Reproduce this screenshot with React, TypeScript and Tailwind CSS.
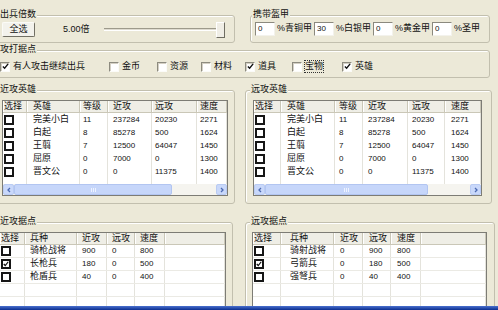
import type { ReactNode } from "react";

type Column = { label: string; width: string; pad: string };
type Row = { checked: boolean; cells: string[] };

const leftHeroColumns: Column[] = [
  { label: "选择", width: "w-[24px]", pad: "pl-[1px]" },
  { label: "英雄", width: "w-[53px]", pad: "pl-[6px]" },
  { label: "等级", width: "w-[28px]", pad: "pl-[3px]" },
  { label: "近攻", width: "w-[44px]", pad: "pl-[5px]" },
  { label: "远攻", width: "w-[45px]", pad: "pl-[3px]" },
  { label: "速度", width: "w-[30px]", pad: "pl-[3px]" },
];

const rightHeroColumns: Column[] = [
  { label: "选择", width: "w-[27px]", pad: "pl-[1px]" },
  { label: "英雄", width: "w-[54px]", pad: "pl-[6px]" },
  { label: "等级", width: "w-[28px]", pad: "pl-[4px]" },
  { label: "近攻", width: "w-[45px]", pad: "pl-[5px]" },
  { label: "远攻", width: "w-[37px]", pad: "pl-[4px]" },
  { label: "速度", width: "w-[36px]", pad: "pl-[6px]" },
];

const leftPointColumns: Column[] = [
  { label: "选择", width: "w-[25px]", pad: "pl-[1px]" },
  { label: "兵种", width: "w-[52px]", pad: "pl-[5px]" },
  { label: "近攻", width: "w-[30px]", pad: "pl-[5px]" },
  { label: "远攻", width: "w-[28px]", pad: "pl-[5px]" },
  { label: "速度", width: "w-[30px]", pad: "pl-[5px]" },
  { label: "", width: "w-[60px]", pad: "pl-[5px]" },
];

const rightPointColumns: Column[] = [
  { label: "选择", width: "w-[28px]", pad: "pl-[1px]" },
  { label: "兵种", width: "w-[53px]", pad: "pl-[9px]" },
  { label: "近攻", width: "w-[29px]", pad: "pl-[6px]" },
  { label: "远攻", width: "w-[28px]", pad: "pl-[6px]" },
  { label: "速度", width: "w-[30px]", pad: "pl-[6px]" },
  { label: "", width: "w-[65px]", pad: "pl-[5px]" },
];

const heroes: Row[] = [
  { checked: false, cells: ["完美小白", "11", "237284", "20230", "2271"] },
  { checked: false, cells: ["白起", "8", "85278", "500", "1624"] },
  { checked: false, cells: ["王翦", "7", "12500", "64047", "1450"] },
  { checked: false, cells: ["屈原", "0", "7000", "0", "1300"] },
  { checked: false, cells: ["晋文公", "0", "0", "11375", "1400"] },
];

const meleePoints: Row[] = [
  { checked: false, cells: ["骑枪战将", "900", "0", "800", ""] },
  { checked: true, cells: ["长枪兵", "180", "0", "500", ""] },
  { checked: false, cells: ["枪盾兵", "40", "0", "400", ""] },
  { checked: false, cells: ["", "", "", "", ""] },
  { checked: false, cells: ["", "", "", "", ""] },
];

const rangedPoints: Row[] = [
  { checked: false, cells: ["骑射战将", "0", "900", "800", ""] },
  { checked: true, cells: ["弓箭兵", "0", "180", "500", ""] },
  { checked: false, cells: ["强弩兵", "0", "40", "400", ""] },
  { checked: false, cells: ["", "", "", "", ""] },
  { checked: false, cells: ["", "", "", "", ""] },
];

const targets = [
  { label: "有人攻击继续出兵", checked: true, width: "w-[109px]", focus: false },
  { label: "金币", checked: false, width: "w-[48px]", focus: false },
  { label: "资源", checked: false, width: "w-[44px]", focus: false },
  { label: "材料", checked: false, width: "w-[44px]", focus: false },
  { label: "道具", checked: true, width: "w-[47px]", focus: false },
  { label: "宝物", checked: false, width: "w-[50px]", focus: true },
  { label: "英雄", checked: true, width: "w-[40px]", focus: false },
];

const armour = [
  { value: "0", label: "%青铜甲" },
  { value: "30", label: "%白银甲" },
  { value: "0", label: "%黄金甲" },
  { value: "0", label: "%圣甲" },
];

function Tick({ className }: { className: string }) {
  return (
    <svg viewBox="0 0 8 8" className={className} aria-hidden="true">
      <path d="M1 4l2 2 4-5" fill="none" stroke="#111" strokeWidth="1.6" />
    </svg>
  );
}

function GroupBox({
  title,
  titleLeft,
  className,
  children,
}: {
  title: string;
  titleLeft: string;
  className: string;
  children: ReactNode;
}) {
  return (
    <div
      className={`relative shrink-0 rounded-[3px] border border-[#c2bfae] shadow-[inset_1px_1px_0_#fff] ${className}`}
    >
      <span
        className={`absolute -top-[7px] bg-[#ece9d8] px-[1px] text-[9px] leading-[11px] text-[#111] ${titleLeft}`}
      >
        {title}
      </span>
      {children}
    </div>
  );
}

function CheckBox({ checked }: { checked: boolean }) {
  return (
    <span className="flex h-[10px] w-[10px] shrink-0 items-center justify-center border border-[#8d8b7f] border-b-[#fbfbf8] border-r-[#fbfbf8] bg-white shadow-[inset_1px_1px_0_#d4d0c4]">
      {checked && <Tick className="h-[7px] w-[7px]" />}
    </span>
  );
}

function TableCheck({ checked }: { checked: boolean }) {
  return (
    <span className="flex h-[10px] w-[10px] items-center justify-center border-2 border-[#161616] bg-white">
      {checked && <Tick className="h-[6px] w-[6px]" />}
    </span>
  );
}

function ArrowButton({ right }: { right?: boolean }) {
  return (
    <span className="flex h-[11px] w-[11px] shrink-0 items-center justify-center rounded-[2px] border border-[#b9cbf3] bg-[#c9d8fa]">
      <svg viewBox="0 0 6 6" className="h-[6px] w-[6px]" aria-hidden="true">
        <path
          d={right ? "M2 1l2 2-2 2" : "M4 1L2 3l2 2"}
          fill="none"
          stroke="#4d6bb3"
          strokeWidth="1.3"
        />
      </svg>
    </span>
  );
}

function HScroll({ thumb }: { thumb: string }) {
  return (
    <div className="flex h-[11px] shrink-0 bg-[#f5f4ef]">
      <ArrowButton />
      <span
        className={`flex h-[11px] shrink-0 items-center justify-center rounded-[2px] border border-[#b2c5f1] bg-[#c6d6fa] ${thumb}`}
      >
        <span className="flex gap-[1px]">
          <span className="h-[4px] w-[1px] bg-[#eef3ff]" />
          <span className="h-[4px] w-[1px] bg-[#eef3ff]" />
          <span className="h-[4px] w-[1px] bg-[#eef3ff]" />
        </span>
      </span>
      <span className="flex-1" />
      <ArrowButton right />
    </div>
  );
}

function ListView({
  columns,
  rows,
  className,
  lines,
  footer,
}: {
  columns: Column[];
  rows: Row[];
  className: string;
  lines: boolean;
  footer?: ReactNode;
}) {
  return (
    <div className={`flex flex-col border border-[#7d7c75] bg-white ${className}`}>
      <div className="flex h-[12px] shrink-0">
        {columns.map((column, i) => (
          <div
            key={i}
            className={`${column.width} ${column.pad} shrink-0 border-b border-r border-[#cac7b7] bg-[#efeee6] text-[9px] leading-[11px] shadow-[inset_1px_0_0_#fff]`}
          >
            {column.label}
          </div>
        ))}
        <div className="flex-1 border-b border-[#cac7b7] bg-[#efeee6]" />
      </div>
      {rows.map((row, r) => (
        <div
          key={r}
          className={`flex h-[13px] shrink-0 ${lines ? "border-b border-[#ebeae4]" : ""}`}
        >
          {columns.map((column, i) => (
            <div
              key={i}
              className={`${column.width} ${column.pad} flex shrink-0 items-center border-r border-[#e4e3dc] ${
                i === 1 ? "text-[9px]" : "text-[8px]"
              }`}
            >
              {i === 0 ? (
                row.cells[0] !== "" ? (
                  <TableCheck checked={row.checked} />
                ) : null
              ) : (
                row.cells[i - 1]
              )}
            </div>
          ))}
        </div>
      ))}
      {footer}
    </div>
  );
}

function HeroFiller({ columns }: { columns: Column[] }) {
  return (
    <div className="flex h-[6px] shrink-0">
      {columns.map((column, i) => (
        <div key={i} className={`${column.width} shrink-0 border-r border-[#e4e3dc]`} />
      ))}
    </div>
  );
}

export default function App() {
  return (
    <div className="flex h-[310px] w-[498px] flex-col overflow-hidden bg-[#ece9d8] font-['Liberation_Sans','Noto_Sans_CJK_SC',sans-serif] text-[#111]">
      <div className="flex h-[306px] shrink-0 flex-col overflow-hidden">
        {/* 出兵倍数 / 携带盔甲 */}
        <div className="mt-[15px] flex">
          <GroupBox title="出兵倍数" titleLeft="left-[4px]" className="-ml-[6px] h-[28px] w-[241px]">
            <div className="flex h-full items-center pl-[7px] pt-[1px]">
              <button className="h-[15px] w-[33px] rounded-[2px] border border-[#fbfbf7] border-b-[#716f64] border-r-[#716f64] bg-[#f3f2ec] text-[9px] leading-[13px]">
                全选
              </button>
              <span className="ml-[28px] text-[9px] leading-[11px]">5.00倍</span>
              <div className="ml-[14px] flex w-[121px] items-center">
                <div className="h-[3px] flex-1 border-t border-b border-[#9d9a8b] border-b-white bg-[#dedbd0]" />
                <div className="-ml-[5px] h-[16px] w-[9px] border border-white border-b-[#6f6d62] border-r-[#6f6d62] bg-[#f0eee6]" />
              </div>
            </div>
          </GroupBox>

          <GroupBox title="携带盔甲" titleLeft="left-[1px]" className="ml-[15px] h-[28px] w-[240px]">
            <div className="flex h-full items-center gap-[2px] pb-[1px] pl-[4px]">
              {armour.map((item) => (
                <div key={item.label} className="flex items-center gap-[2px]">
                  <span className="h-[14px] w-[20px] border border-[#8b897e] border-b-[#f3f2ec] border-r-[#f3f2ec] bg-white pl-[2px] text-[8px] leading-[12px]">
                    {item.value}
                  </span>
                  <span className="text-[9px] leading-[11px]">{item.label}</span>
                </div>
              ))}
            </div>
          </GroupBox>
        </div>

        {/* 攻打据点 */}
        <GroupBox title="攻打据点" titleLeft="left-[4px]" className="-ml-[6px] mt-[7px] h-[28px] w-[496px]">
          <div className="flex pl-[5px] pt-[10px]">
            {targets.map((item) => (
              <div key={item.label} className={`flex shrink-0 items-center gap-[3px] ${item.width}`}>
                <CheckBox checked={item.checked} />
                <span
                  className={`text-[9px] leading-[11px] ${
                    item.focus ? "outline outline-1 outline-dotted outline-[#333]" : ""
                  }`}
                >
                  {item.label}
                </span>
              </div>
            ))}
          </div>
        </GroupBox>

        {/* 英雄 */}
        <div className="mt-[12px] flex">
          <GroupBox title="近攻英雄" titleLeft="left-[4px]" className="-ml-[6px] h-[114px] w-[241px]">
            <div className="pl-[7px] pt-[9px]">
              <ListView
                columns={leftHeroColumns}
                rows={heroes}
                className="w-[226px]"
                lines={false}
                footer={
                  <>
                    <HeroFiller columns={leftHeroColumns} />
                    <HScroll thumb="w-[158px]" />
                  </>
                }
              />
            </div>
          </GroupBox>

          <GroupBox title="远攻英雄" titleLeft="left-[4px]" className="ml-[10px] h-[114px] w-[247px]">
            <div className="pl-[7px] pt-[9px]">
              <ListView
                columns={rightHeroColumns}
                rows={heroes}
                className="w-[229px]"
                lines={false}
                footer={
                  <>
                    <HeroFiller columns={rightHeroColumns} />
                    <HScroll thumb="w-[163px]" />
                  </>
                }
              />
            </div>
          </GroupBox>
        </div>

        {/* 据点 */}
        <div className="mt-[18px] flex">
          <GroupBox title="近攻据点" titleLeft="left-[4px]" className="-ml-[6px] h-[92px] w-[239px]">
            <div className="pl-[4px] pt-[9px]">
              <ListView columns={leftPointColumns} rows={meleePoints} className="w-[227px]" lines />
            </div>
          </GroupBox>

          <GroupBox title="远攻据点" titleLeft="left-[4px]" className="ml-[12px] h-[92px] w-[250px]">
            <div className="pl-[6px] pt-[9px]">
              <ListView columns={rightPointColumns} rows={rangedPoints} className="w-[235px]" lines />
            </div>
          </GroupBox>
        </div>
      </div>

      <div className="h-[4px] shrink-0 bg-gradient-to-b from-[#4a70cf] to-[#0c2d8e]" />
    </div>
  );
}
